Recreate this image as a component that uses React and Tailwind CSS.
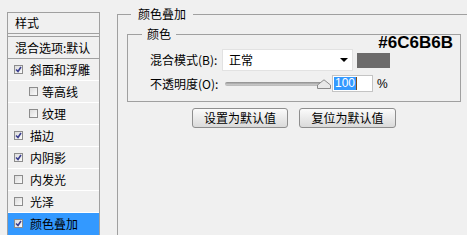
import React from "react";

function Check({ checked }) {
  return (
    <span className="w-[9px] h-[9px] shrink-0 border border-[#8c8c8c] bg-gradient-to-br from-[#dcdcdc] to-[#fbfbfb] flex items-center justify-center">
      {checked && (
        <svg width="7" height="7" viewBox="0 0 7 7">
          <path d="M1 3.5 L3 5.5 L6 1" fill="none" stroke="#3b3f8f" strokeWidth="1.6" />
        </svg>
      )}
    </span>
  );
}

function Row({ label, checked, sub, selected }) {
  return (
    <div
      className={
        "h-[22px] flex items-center border-b " +
        (selected ? "bg-[#3399ff] border-[#3399ff]" : "border-white") +
        (sub ? " pl-[21px]" : " pl-[6px]")
      }
    >
      <Check checked={checked} />
      <span className={sub ? "ml-[4px]" : "ml-[7px]"}>{label}</span>
    </div>
  );
}

export default function App() {
  const rows = [
    { label: "斜面和浮雕", checked: true },
    { label: "等高线", sub: true },
    { label: "纹理", sub: true },
    { label: "描边", checked: true },
    { label: "内阴影", checked: true },
    { label: "内发光" },
    { label: "光泽" },
    { label: "颜色叠加", checked: true, selected: true },
  ];
  return (
    <div className="w-[467px] h-[235px] overflow-hidden bg-[#f0f0f0] flex font-['Noto_Sans_CJK_SC',sans-serif] text-[12px] leading-[16px] text-black">
      {/* left list */}
      <div className="pl-[7px] pt-[12px] w-[117px] shrink-0">
        <div className="w-[93px] h-[240px] border-t border-l border-r border-[#a0a0a0]">
          <div className="h-[21px] pl-[7px] flex items-center border-b border-[#a0a0a0]">样式</div>
          <div className="h-[2px]" />
          <div className="h-[23px] pl-[7px] flex items-center border-t border-b border-[#a0a0a0] whitespace-nowrap overflow-hidden">
            混合选项:默认
          </div>
          {rows.map((r) => (
            <Row key={r.label} {...r} />
          ))}
        </div>
      </div>

      {/* right: outer group */}
      <div className="pt-[6px] w-[360px] shrink-0 flex flex-col">
        <div className="flex h-[16px]">
          <div className="w-[14px] h-[8px] self-end border-t border-l border-[#a0a0a0]" />
          <span className="px-[7px]">颜色叠加</span>
          <div className="flex-1 h-[8px] self-end border-t border-[#a0a0a0]" />
        </div>
        <div className="flex-1 border-l border-[#a0a0a0] pl-[9px] pt-[4px]">
          {/* inner group */}
          <div className="relative w-[334px]">
            <div className="flex h-[16px]">
              <div className="w-[15px] h-[8px] self-end border-t border-l border-[#a0a0a0]" />
              <span className="px-[5px]">颜色</span>
              <div className="flex-1 h-[8px] self-end border-t border-r border-[#a0a0a0]" />
            </div>
            <div className="absolute right-[8px] top-[7px] font-['Liberation_Sans',sans-serif] font-bold text-[17px] leading-[20px]">
              #6C6B6B
            </div>
            <div className="border-l border-r border-b border-[#a0a0a0] pl-[22px] pt-[7px] pb-[9px]">
              <div className="flex items-center h-[22px]">
                <span className="w-[72px] whitespace-nowrap">混合模式(B):</span>
                <div className="w-[131px] h-[22px] bg-white border border-[#e2e2e2] flex items-center justify-between pl-[6px] pr-[4px]">
                  <span>正常</span>
                  <svg width="8" height="4" viewBox="0 0 8 4">
                    <path d="M0 0 H8 L4 4 Z" fill="#000" />
                  </svg>
                </div>
                <div className="ml-[4px] w-[33px] h-[15px] bg-[#6c6b6b]" />
              </div>
              <div className="mt-[4px] flex items-center h-[17px]">
                <span className="w-[72px] whitespace-nowrap">不透明度(O):</span>
                <div className="relative w-[110px] h-[17px] flex items-center">
                  <div className="ml-[3px] w-[98px] h-[4px] rounded-[2px] bg-gradient-to-b from-[#8d8d8d] to-[#d0d0d0] border-b border-[#bdbdbd]" />
                  <svg className="absolute left-[95px] top-[4px]" width="14" height="10" viewBox="0 0 14 10">
                    <path d="M0.5 9.5 V6 L7 0.8 L13.5 6 V9.5 Z" fill="#e8e8e8" stroke="#8a8a8a" strokeWidth="1" />
                  </svg>
                </div>
                <div className="w-[41px] h-[17px] bg-white border border-[#c4c4c4] flex items-center pl-[1px]">
                  <span className="bg-[#3399ff] text-white font-['Liberation_Sans',sans-serif] text-[12px] leading-[13px] px-[1px]">100</span>
                  <span className="w-[1px] h-[13px] bg-[#7a4a1a]" />
                </div>
                <span className="ml-[4px] font-['Liberation_Sans',sans-serif]">%</span>
              </div>
            </div>
          </div>
          <div className="w-[334px] mt-[6px] flex justify-center gap-[11px]">
            <button className="w-[96px] h-[20px] border border-[#8e8e8e] rounded-[3px] bg-gradient-to-b from-[#fbfbfb] to-[#dadada] leading-[16px]">
              设置为默认值
            </button>
            <button className="w-[97px] h-[20px] border border-[#8e8e8e] rounded-[3px] bg-gradient-to-b from-[#fbfbfb] to-[#dadada] leading-[16px]">
              复位为默认值
            </button>
          </div>
        </div>
      </div>
    </div>
  );
}
